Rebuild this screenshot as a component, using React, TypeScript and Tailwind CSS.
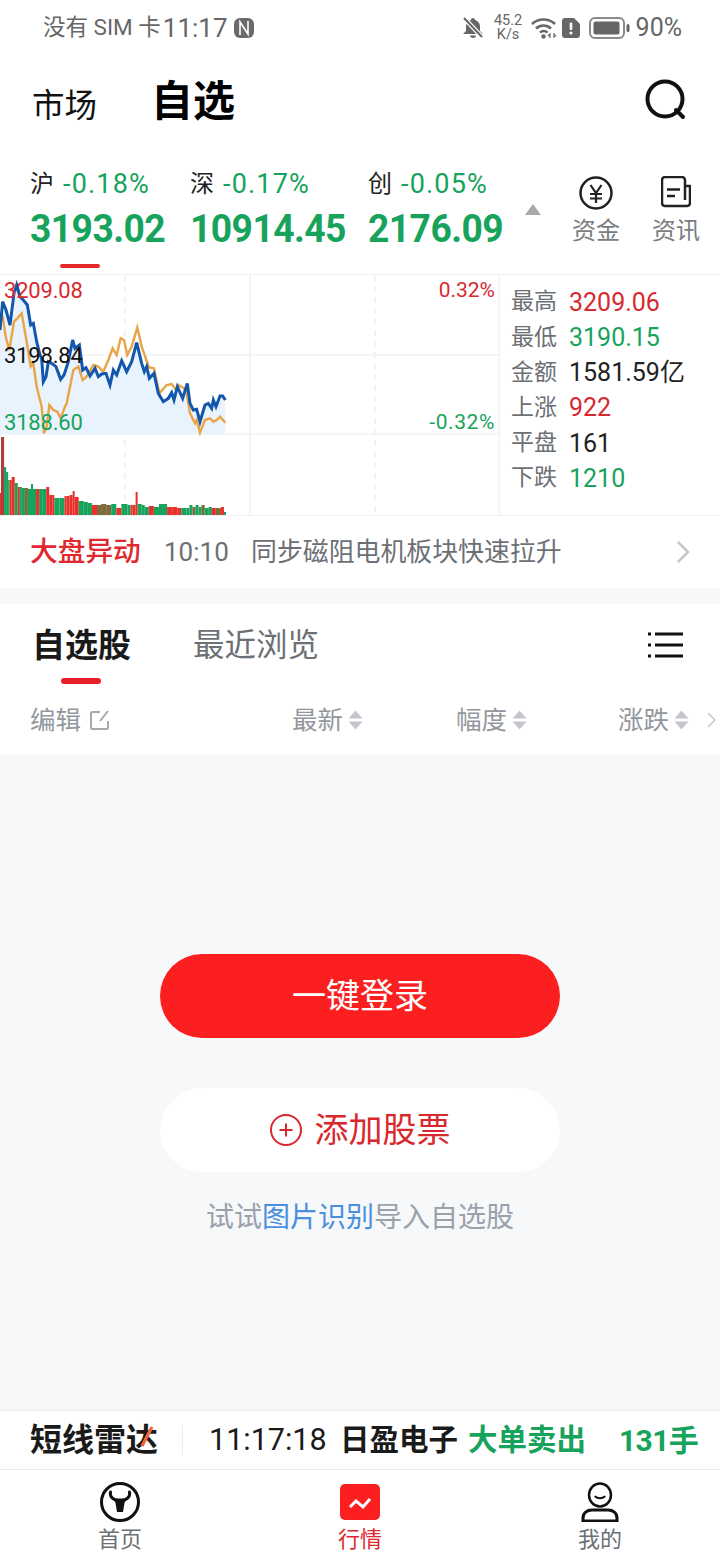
import React from "react";

const blue = "0,180 8,95 18,120 30,165 42,70 50,45 60,80 70,90 82,105 92,165 100,160 110,215 120,255 125,265 130,335 138,320 145,275 155,280 168,290 182,328 192,315 205,275 218,210 225,235 238,225 248,300 258,293 270,318 285,295 295,320 305,312 318,310 330,345 340,300 350,315 365,272 380,305 395,275 410,218 425,280 433,305 440,290 448,325 462,310 475,370 490,395 505,385 515,368 522,390 532,350 548,385 562,340 570,400 580,420 590,418 600,455 615,405 625,400 635,415 640,390 648,410 660,378 668,378 676,390";
const orange = "0,130 8,140 18,205 28,240 42,155 52,145 65,130 80,215 92,290 100,280 110,350 125,410 132,490 140,470 148,405 160,420 172,425 182,445 195,410 200,400 220,300 235,290 248,330 260,320 280,285 295,290 310,305 325,270 338,235 350,255 362,205 372,210 382,255 395,230 412,172 425,230 447,292 462,295 478,370 500,345 515,342 528,360 535,345 552,355 560,370 570,430 585,460 590,450 600,488 615,450 630,445 640,455 650,450 660,440 676,458";

const toChart = (s: string) =>
  s
    .split(" ")
    .map((p) => {
      const [x, y] = p.split(",").map(Number);
      return `${x / 3},${(y - 15) / 3}`;
    })
    .join(" ");

const R = "#e8302a", G = "#17a35c", D = "#b23a3a", B = "#7d6b3c";
const bars: [number, number, string][] = [
  [1, 22, R], [3, 78, D], [2, 48, G], [2, 43, G], [1.5, 35, G], [2, 35, R], [3, 38, R], [3, 32, G], [2, 28, R], [2, 28, G],
  [3, 27, G], [3, 27, B], [3, 26, G], [2, 31, G], [3, 26, G], [3, 26, R], [3, 26, G], [4, 26, G], [3, 28, R], [3, 20, R],
  [2, 20, R], [5, 17, G], [5, 17, G], [2, 19, R], [3, 19, R], [3, 20, R], [2, 24, R], [4, 18, R], [5, 14, G], [4, 13, G],
  [4, 12, G], [5, 10, R], [4, 10, B], [5, 11, B], [5, 10, B], [5, 11, G], [5, 7, R], [6, 11, G], [3, 10, G], [2, 10, R],
  [3, 10, R], [2, 23, R], [4, 11, G], [3, 10, G], [4, 8, G], [5, 9, R], [5, 8, G], [4, 11, G], [4, 11, G], [5, 8, R],
  [5, 8, R], [4, 7, R], [5, 7, G], [3, 7, G], [3, 10, G], [3, 8, B], [3, 10, G], [3, 8, G], [3, 10, B], [4, 7, G],
  [3, 8, G], [4, 7, R], [5, 7, B], [3, 8, R], [2, 3, G],
];
const barTotal = bars.reduce((a, b) => a + b[0], 0);
const barScale = 226 / barTotal;

function Stat({ label, value, color }: { label: string; value: string; color: string }) {
  return (
    <div className="flex h-[35.200px] items-center">
      <span className="w-[58px] text-[23px] text-[#6c7075]">{label}</span>
      <span className={`text-[25px] ${color}`}>{value}</span>
    </div>
  );
}

function Index({ name, pct, value, width }: { name: string; pct: string; value: string; width: string }) {
  return (
    <div className={`flex flex-col ${width}`}>
      <div className="flex h-[36px] items-center">
        <span className="text-[24px] text-[#222]">{name}</span>
        <span className="ml-[9px] text-[27px] tracking-[1.200px] text-[#17a35c]">{pct}</span>
      </div>
      <div className="mt-[5px] h-[44px] origin-left scale-x-[0.955] text-[39px] leading-[44px] font-bold tracking-[-0.6px] whitespace-nowrap text-[#17a35c]">{value}</div>
    </div>
  );
}

function Sort() {
  return (
    <svg width="15" height="20" viewBox="0 0 15 20" className="ml-[5px]">
      <path d="M7.5 0.5 L14.5 8.5 H0.5 Z M0.5 11.5 H14.5 L7.5 19.5 Z" fill="#c3c6cb" />
    </svg>
  );
}

function SortHead({ label, width }: { label: string; width: string }) {
  return (
    <div className={`flex items-center ${width}`}>
      <span className="text-[25.500px] text-[#93979d]">{label}</span>
      <Sort />
    </div>
  );
}

export default function App() {
  return (
    <div className="flex h-[1560px] w-[720px] flex-col overflow-hidden bg-[#f6f8fa] font-['Roboto','Noto_Sans_CJK_SC',sans-serif]">
      {/* status bar */}
      <div className="flex h-[56px] shrink-0 items-center bg-white pl-[43px] pr-[38px] text-[#666]">
        <span className="text-[22.500px]">没有 SIM 卡</span>
        <span className="ml-[2px] text-[26px]">11:17</span>
        <svg width="20" height="20" viewBox="0 0 20 20" className="ml-[6px]">
          <rect width="20" height="20" rx="6" fill="#6b6b6b" />
          <path d="M6 17V4l8 12V3" fill="none" stroke="#fff" strokeWidth="1.600" />
        </svg>
        <svg width="24" height="22" viewBox="0 0 24 22" className="ml-auto">
          <path d="M12 1c1 0 2 .8 2 2 3.2.8 5 3.4 5 6.5V14l3 3H2l3-3V9.5C5 6.4 6.800 3.800 10 3c0-1.200 1-2 2-2z" fill="#666" />
          <path d="M9 18.500h6c0 1.500-1.300 2.500-3 2.500s-3-1-3-2.500z" fill="#666" />
          <path d="M3 1l18 19" stroke="#fff" strokeWidth="4.500" />
          <path d="M3 1l18 19" stroke="#666" strokeWidth="2" />
        </svg>
        <div className="ml-[10px] flex w-[27px] flex-col items-center text-[14.500px] leading-[14px]">
          <span>45.2</span>
          <span>K/s</span>
        </div>
        <svg width="26" height="22" viewBox="0 0 26 22" className="ml-[9px]">
          <path d="M1 7c6.500-6 16.500-6 23 0M5 11.500c4.500-4 10.500-4 15 0M9 15.500c2.500-2 5-2 7.500 0" fill="none" stroke="#666" strokeWidth="2.600" />
          <circle cx="12.500" cy="19.500" r="2.200" fill="#666" />
          <path d="M19 21v-4l-2 2M23 16v4l2-2" fill="none" stroke="#666" strokeWidth="1.200" />
        </svg>
        <svg width="18" height="20" viewBox="0 0 18 20" className="ml-[5px]">
          <path d="M3 0h9l6 6v11a3 3 0 0 1-3 3H3a3 3 0 0 1-3-3V3a3 3 0 0 1 3-3z" fill="#666" />
          <rect x="7.700" y="4.500" width="2.600" height="7.500" rx="1" fill="#fff" />
          <circle cx="9" cy="15" r="1.600" fill="#fff" />
        </svg>
        <svg width="41" height="22" viewBox="0 0 41 22" className="ml-[9px]">
          <rect x="1" y="1" width="34" height="20" rx="5" fill="none" stroke="#8a8a8a" strokeWidth="2" />
          <rect x="4.500" y="4.500" width="26" height="13" rx="2" fill="#666" />
          <rect x="37.500" y="7" width="3" height="8" rx="1.500" fill="#666" />
        </svg>
        <span className="ml-[6px] text-[25px]">90%</span>
      </div>

      {/* header */}
      <div className="flex h-[90px] shrink-0 items-center bg-white pl-[32px] pr-[33px]">
        <span className="mt-[10px] text-[32.500px] leading-[40px] text-[#111]">市场</span>
        <span className="ml-[54px] mt-[2px] text-[42px] leading-[50px] font-bold text-black">自选</span>
        <svg width="42" height="42" viewBox="0 0 42 42" className="mt-[-3px] ml-auto">
          <circle cx="20" cy="20" r="17.500" fill="none" stroke="#111" strokeWidth="4" />
          <path d="M31 31l7 7" stroke="#111" strokeWidth="4" strokeLinecap="round" />
        </svg>
      </div>

      {/* index row */}
      <div className="flex h-[129px] shrink-0 flex-col border-b border-[#eeeff1] bg-white">
        <div className="flex h-[118px] pl-[30px] pt-[20px]">
          <Index name="沪" pct="-0.18%" value="3193.02" width="w-[160px]" />
          <Index name="深" pct="-0.17%" value="10914.45" width="w-[178px]" />
          <Index name="创" pct="-0.05%" value="2176.09" width="w-[157px]" />
          <svg width="16" height="11" viewBox="0 0 16 11" className="mt-[38px]">
            <path d="M8 0l8 11H0z" fill="#a9a9a9" />
          </svg>
          <div className="ml-[31px] flex w-[48px] flex-col items-center pt-[10px]">
            <svg width="34" height="34" viewBox="0 0 34 34">
              <circle cx="17" cy="17" r="15.500" fill="none" stroke="#222" strokeWidth="2.500" />
              <path d="M11.500 9l5.500 8 5.500-8M11 18h12M11 22.500h12M17 17v10" fill="none" stroke="#222" strokeWidth="2.200" />
            </svg>
            <span className="mt-[3px] text-[24px] leading-[36px] whitespace-nowrap text-[#7a7d82]">资金</span>
          </div>
          <div className="ml-[32px] flex w-[48px] flex-col items-center pt-[10px]">
            <svg width="30" height="34" viewBox="0 0 30 34">
              <path d="M24 10V4a3 3 0 0 0-3-3H4a3 3 0 0 0-3 3v23a3 3 0 0 0 3 3h22a3 3 0 0 0 3-3V10h-5v14" fill="none" stroke="#222" strokeWidth="2.500" strokeLinejoin="round" />
              <path d="M6 13.500h13M6 20h8" stroke="#222" strokeWidth="2.500" />
            </svg>
            <span className="mt-[3px] text-[24px] leading-[36px] whitespace-nowrap text-[#7a7d82]">资讯</span>
          </div>
        </div>
        <div className="ml-[60px] h-[4px] w-[40px] rounded-full bg-[#e62828]" />
      </div>

      {/* chart + stats */}
      <div className="flex h-[241px] shrink-0 border-b border-[#eeeff1] bg-white">
        <div className="relative h-[240px] w-[500px] shrink-0">
          <svg width="500" height="240" viewBox="0 0 500 240" className="absolute inset-0">
            <path d="M0 80H499M0 159H499" stroke="#f1f2f4" strokeWidth="1.500" />
            <path d="M250 0V240M499.500 0V240" stroke="#eff0f2" strokeWidth="1.500" />
            <path d="M125 0V240M375 0V240" stroke="#eff0f2" strokeWidth="1.500" strokeDasharray="6 5" />
            <polygon points={`0,${(493 - 15) / 3} ${toChart(blue)} 225.300,${(493 - 15) / 3}`} fill="#e8f3fd" />
            <polyline points={toChart(orange)} fill="none" stroke="#e9a445" strokeWidth="2.400" />
            <polyline points={toChart(blue)} fill="none" stroke="#1257ab" strokeWidth="3" />
            {(() => {
              let x = 0;
              const out: React.ReactNode[] = [];
              bars.forEach(([w, h, c], i) => {
                out.push(<rect key={i} x={x} y={240 - h} width={w * barScale} height={h} fill={c} />);
                x += w * barScale;
              });
              return out;
            })()}
          </svg>
          <span className="absolute left-[4px] top-[2px] text-[22px] leading-[27px] tracking-[-0.2px] text-[#d8292f]">3209.08</span>
          <span className="absolute left-[4px] top-[67px] text-[22px] leading-[27px] tracking-[-0.2px] text-[#111]">3198.84</span>
          <span className="absolute left-[4px] top-[134px] text-[22px] leading-[27px] tracking-[-0.2px] text-[#17a35c]">3188.60</span>
          <span className="absolute right-[5px] top-[2px] text-[21px] leading-[27px] text-[#d8292f]">0.32%</span>
          <span className="absolute right-[5px] top-[134px] text-[21px] leading-[27px] tracking-[0.6px] text-[#17a35c]">-0.32%</span>
        </div>
        <div className="flex-1 pl-[11px] pt-[10px]">
          <Stat label="最高" value="3209.06" color="text-[#d8292f]" />
          <Stat label="最低" value="3190.15" color="text-[#17a35c]" />
          <Stat label="金额" value="1581.59亿" color="text-[#222]" />
          <Stat label="上涨" value="922" color="text-[#d8292f]" />
          <Stat label="平盘" value="161" color="text-[#222]" />
          <Stat label="下跌" value="1210" color="text-[#17a35c]" />
        </div>
      </div>

      {/* news */}
      <div className="flex h-[72px] shrink-0 items-center bg-white pl-[30px] pr-[30px]">
        <span className="w-[134px] text-[27.700px] font-medium whitespace-nowrap text-[#e0282e]">大盘异动</span>
        <span className="w-[87px] text-[26px] text-[#6c7075]">10:10</span>
        <span className="text-[25.900px] whitespace-nowrap text-[#6c7075]">同步磁阻电机板块快速拉升</span>
        <svg width="14" height="24" viewBox="0 0 14 24" className="ml-auto">
          <path d="M2 2l10 10L2 22" fill="none" stroke="#c3c6ca" strokeWidth="2.500" />
        </svg>
      </div>

      {/* tabs */}
      <div className="mt-[16px] shrink-0 bg-white">
        <div className="flex h-[74px] items-end pl-[32px] pr-[36px]">
          <span className="mb-[9px] text-[33px] leading-[46px] font-bold text-[#1a1a1a]">自选股</span>
          <span className="mb-[9px] ml-[62px] text-[31.500px] leading-[46px] text-[#6c7075]">最近浏览</span>
          <svg width="36" height="26" viewBox="0 0 36 26" className="mb-[20px] ml-auto">
            <path d="M7 2H35M7 13H35M7 24H35" stroke="#111" strokeWidth="3" />
            <path d="M0 2H3M0 13H3M0 24H3" stroke="#111" strokeWidth="3" />
          </svg>
        </div>
        <div className="ml-[61px] h-[6px] w-[40px] rounded-full bg-[#e62028]" />
        <div className="flex h-[70px] items-center pl-[30px] pt-[2px]">
          <span className="text-[25.500px] text-[#93979d]">编辑</span>
          <svg width="22" height="22" viewBox="0 0 22 22" className="ml-[8px] mr-[181px]">
            <path d="M11 3H3.500a1.500 1.500 0 0 0-1.500 1.500v14a1.500 1.500 0 0 0 1.500 1.500h14a1.500 1.500 0 0 0 1.500-1.500V12" fill="none" stroke="#a5a8ad" strokeWidth="2" />
            <path d="M19 2l-8 10" stroke="#a5a8ad" strokeWidth="2" />
          </svg>
          <SortHead label="最新" width="w-[164px]" />
          <SortHead label="幅度" width="w-[162px]" />
          <SortHead label="涨跌" width="w-[89px]" />
          <svg width="9" height="16" viewBox="0 0 9 16">
            <path d="M1 1l7 7-7 7" fill="none" stroke="#c3c6ca" strokeWidth="1.500" />
          </svg>
        </div>
      </div>

      {/* empty body */}
      <div className="flex flex-1 flex-col items-center bg-[#f6f8fa] pt-[200px]">
        <div className="flex h-[84px] w-[400px] items-center justify-center rounded-full bg-[#fb1f1f] text-[34px] text-white">一键登录</div>
        <div className="mt-[50px] flex h-[84px] w-[400px] items-center justify-center rounded-full bg-white text-[34px] text-[#d9282d]">
          <svg width="32" height="32" viewBox="0 0 32 32" className="mr-[13px]">
            <circle cx="16" cy="16" r="15" fill="none" stroke="#d9282d" strokeWidth="2" />
            <path d="M9.500 16h13M16 9.500v13" stroke="#d9282d" strokeWidth="2" />
          </svg>
          添加股票
        </div>
        <div className="mt-[25px] text-[28px] leading-[42px] text-[#9aa1ab]">
          试试<span className="text-[#4a8fdd]">图片识别</span>导入自选股
        </div>
      </div>

      {/* radar */}
      <div className="flex h-[60px] shrink-0 items-center border-y border-[#ececee] bg-white pl-[30px] font-bold">
        <span className="relative w-[129px] text-[32px] leading-[40px] whitespace-nowrap text-[#1a1a1a]">
          短线雷达
          <svg width="14" height="24" viewBox="0 0 14 24" className="absolute left-[110px] top-[6px]">
            <path d="M12 1L2 20" stroke="#f0683a" strokeWidth="3.200" />
          </svg>
        </span>
        <div className="ml-[23px] h-[30px] w-px bg-[#eeeeee]" />
        <span className="ml-[26px] w-[131px] text-[30.500px] font-normal whitespace-nowrap text-[#1a1a1a]">11:17:18</span>
        <span className="w-[128px] text-[29.500px] whitespace-nowrap text-[#1a1a1a]">日盈电子</span>
        <span className="w-[151px] text-[29.500px] whitespace-nowrap text-[#17a35c]">大单卖出</span>
        <span className="text-[30px] tracking-[-0.6px] whitespace-nowrap text-[#17a35c]">131手</span>
      </div>

      {/* nav */}
      <div className="grid h-[90px] shrink-0 grid-cols-3 bg-white pt-[12px]">
        <div className="flex flex-col items-center">
          <svg width="40" height="40" viewBox="0 0 40 40">
            <circle cx="20" cy="20" r="18.500" fill="none" stroke="#111" strokeWidth="3" />
            <path d="M10.500 10c-1 5 3 8 7 8h5c4 0 8-3 7-8" fill="none" stroke="#111" strokeWidth="3" strokeLinecap="round" />
            <path d="M13.500 17h13l-2 4-1.500 9h-6l-1.500-9z" fill="#111" />
          </svg>
          <span className="mt-[3px] text-[22px] leading-[30px] text-[#6c7075]">首页</span>
        </div>
        <div className="flex flex-col items-center">
          <svg width="40" height="40" viewBox="0 0 40 40">
            <rect y="2" width="40" height="36" rx="5" fill="#fb1f1f" />
            <path d="M10 25l6-6 7 6 7-8" fill="none" stroke="#fff" strokeWidth="3" />
          </svg>
          <span className="mt-[3px] text-[22px] leading-[30px] text-[#e0282e]">行情</span>
        </div>
        <div className="flex flex-col items-center">
          <svg width="38" height="40" viewBox="0 0 38 40">
            <ellipse cx="19" cy="13" rx="11" ry="11.500" fill="none" stroke="#111" strokeWidth="2.500" />
            <path d="M14 14c2 3 8 3 10 0" fill="none" stroke="#111" strokeWidth="2.200" />
            <path d="M2 39v-3c0-5 4-8 9-8h16c5 0 9 3 9 8v3z" fill="none" stroke="#111" strokeWidth="3" />
          </svg>
          <span className="mt-[3px] text-[22px] leading-[30px] text-[#6c7075]">我的</span>
        </div>
      </div>
    </div>
  );
}
